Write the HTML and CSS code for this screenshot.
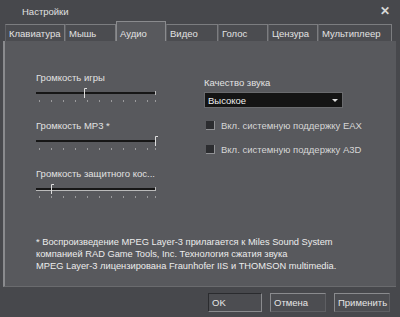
FILE: index.html
```html
<!DOCTYPE html>
<html lang="ru">
<head>
    <meta charset="UTF-8">
    <title>Настройки</title>
    <link rel="stylesheet" href="styles.css">
</head>
<body>
    <div class="window">
        <div class="titlebar">
            <span class="title">Настройки</span>
            <span class="close">&#x2715;</span>
        </div>

        <div class="tabs">
            <div class="tab" style="width: 60px">Клавиатура</div>
            <div class="tab" style="width: 51px">Мышь</div>
            <div class="tab active" style="width: 50px">Аудио</div>
            <div class="tab" style="width: 52px">Видео</div>
            <div class="tab" style="width: 50px">Голос</div>
            <div class="tab" style="width: 50px">Цензура</div>
            <div class="tab" style="width: 74px">Мультиплеер</div>
        </div>

        <div class="panel">
            <div class="columns">
                <div class="sliders">
                    <div class="slider">
                        <div class="label">Громкость игры</div>
                        <svg width="124" height="18" viewBox="0 0 124 18">
                            <rect x="0" y="4" width="119" height="2" fill="#161616"/>
                            <line x1="119.5" y1="3" x2="119.5" y2="7" stroke="#bbb"/>
                            <g stroke="#9a9a9c">
                                <line x1="3.5" y1="12" x2="3.5" y2="14"/><line x1="15.5" y1="12" x2="15.5" y2="14"/>
                                <line x1="27.5" y1="12" x2="27.5" y2="14"/><line x1="39.5" y1="12" x2="39.5" y2="14"/>
                                <line x1="51.5" y1="12" x2="51.5" y2="14"/><line x1="63.5" y1="12" x2="63.5" y2="14"/>
                                <line x1="75.5" y1="12" x2="75.5" y2="14"/><line x1="87.5" y1="12" x2="87.5" y2="14"/>
                                <line x1="99.5" y1="12" x2="99.5" y2="14"/><line x1="111.5" y1="12" x2="111.5" y2="14"/>
                                <line x1="119.5" y1="12" x2="119.5" y2="14"/>
                            </g>
                            <path d="M48.5 10 V0.5 H51" stroke="#ddd" fill="none"/>
                        </svg>
                    </div>
                    <div class="slider">
                        <div class="label">Громкость MP3 *</div>
                        <svg width="124" height="18" viewBox="0 0 124 18">
                            <rect x="0" y="4" width="119" height="2" fill="#161616"/>
                            <g stroke="#9a9a9c">
                                <line x1="3.5" y1="12" x2="3.5" y2="14"/><line x1="15.5" y1="12" x2="15.5" y2="14"/>
                                <line x1="27.5" y1="12" x2="27.5" y2="14"/><line x1="39.5" y1="12" x2="39.5" y2="14"/>
                                <line x1="51.5" y1="12" x2="51.5" y2="14"/><line x1="63.5" y1="12" x2="63.5" y2="14"/>
                                <line x1="75.5" y1="12" x2="75.5" y2="14"/><line x1="87.5" y1="12" x2="87.5" y2="14"/>
                                <line x1="99.5" y1="12" x2="99.5" y2="14"/><line x1="111.5" y1="12" x2="111.5" y2="14"/>
                                <line x1="119.5" y1="12" x2="119.5" y2="14"/>
                            </g>
                            <path d="M119.5 10 V0.5 H122" stroke="#ddd" fill="none"/>
                        </svg>
                    </div>
                    <div class="slider">
                        <div class="label">Громкость защитного кос...</div>
                        <svg width="124" height="18" viewBox="0 0 124 18">
                            <rect x="0" y="4" width="119" height="2" fill="#161616"/>
                            <line x1="0" y1="6.5" x2="120" y2="6.5" stroke="#bbb"/>
                            <line x1="119.5" y1="3" x2="119.5" y2="7" stroke="#bbb"/>
                            <g stroke="#9a9a9c">
                                <line x1="3.5" y1="12" x2="3.5" y2="14"/><line x1="15.5" y1="12" x2="15.5" y2="14"/>
                                <line x1="27.5" y1="12" x2="27.5" y2="14"/><line x1="39.5" y1="12" x2="39.5" y2="14"/>
                                <line x1="51.5" y1="12" x2="51.5" y2="14"/><line x1="63.5" y1="12" x2="63.5" y2="14"/>
                                <line x1="75.5" y1="12" x2="75.5" y2="14"/><line x1="87.5" y1="12" x2="87.5" y2="14"/>
                                <line x1="99.5" y1="12" x2="99.5" y2="14"/><line x1="111.5" y1="12" x2="111.5" y2="14"/>
                                <line x1="119.5" y1="12" x2="119.5" y2="14"/>
                            </g>
                            <path d="M15.5 10 V0.5 H18" stroke="#ddd" fill="none"/>
                        </svg>
                    </div>
                </div>

                <div class="options">
                    <div class="label">Качество звука</div>
                    <div class="select">
                        <span>Высокое</span>
                        <span class="arrow"></span>
                    </div>
                    <div class="check"><span class="box"></span>Вкл. системную поддержку EAX</div>
                    <div class="check"><span class="box"></span>Вкл. системную поддержку A3D</div>
                </div>
            </div>

            <p class="note">
                * Воспроизведение MPEG Layer-3 прилагается к Miles Sound System<br>
                компанией RAD Game Tools, Inc. Технология сжатия звука<br>
                MPEG Layer-3 лицензирована Fraunhofer IIS и THOMSON multimedia.
            </p>
        </div>

        <div class="buttons">
            <button class="btn ok">OK</button>
            <button class="btn">Отмена</button>
            <button class="btn">Применить</button>
        </div>
    </div>
</body>
</html>
```

FILE: styles.css
```css
body {
    margin: 0;
    background-color: #3c3d41;
    font-family: "Liberation Sans", Arial, sans-serif;
    font-size: 9.5px;
    color: #e6e6e6;
}
.window {
    width: 400px;
    height: 317px;
    display: flex;
    flex-direction: column;
    background-color: #47484c;
    box-sizing: border-box;
}
.titlebar {
    height: 22px;
    display: flex;
    align-items: center;
    justify-content: space-between;
    padding: 0 10px 0 22px;
}
.title {
    font-size: 9.5px;
    color: #e0e0e0;
}
.close {
    font-size: 12px;
    font-weight: bold;
    color: #d8d8d8;
}
.tabs {
    display: flex;
    align-items: flex-end;
    height: 19px;
    padding-left: 5px;
}
.tab {
    height: 17px;
    box-sizing: border-box;
    border: 1px solid #7c7d80;
    border-bottom: none;
    border-left-color: #606165;
    background-color: #4b4c50;
    padding: 3px 0 0 3px;
    font-size: 9.5px;
    color: #e2e2e2;
    white-space: nowrap;
    overflow: hidden;
}
.tab.active {
    height: 20px;
    padding-top: 6px;
    background-color: #58595d;
    border-color: #8a8b8e;
}
.panel {
    flex: 1;
    margin: 0 4px 0 3px;
    background-color: #58595d;
    border-left: 2px solid #8a8b8e;
    border-bottom: 1px solid #6a6b6e;
    box-sizing: border-box;
    padding: 31px 0 0 31px;
    display: flex;
    flex-direction: column;
}
.columns {
    display: grid;
    grid-template-columns: 168px 1fr;
}
.sliders {
    display: flex;
    flex-direction: column;
    gap: 14px;
}
.slider .label {
    margin-bottom: 5px;
}
.slider svg {
    display: block;
}
.label {
    font-size: 9.5px;
    color: #e2e2e2;
}
.options {
    padding-top: 5px;
}
.options .label {
    margin-bottom: 4px;
}
.select {
    width: 139px;
    height: 16px;
    box-sizing: border-box;
    background-color: #141414;
    border: 1px solid #6a6b6e;
    display: flex;
    align-items: center;
    justify-content: space-between;
    padding: 0 4px 0 3px;
    color: #eee;
}
.arrow {
    width: 0;
    height: 0;
    border-left: 3px solid transparent;
    border-right: 3px solid transparent;
    border-top: 3px solid #ddd;
}
.check {
    display: flex;
    align-items: center;
    gap: 6px;
    margin-top: 12px;
    padding-left: 2px;
    color: #d6d6d6;
}
.check + .check {
    margin-top: 13px;
}
.box {
    width: 8px;
    height: 8px;
    background-color: #2c2d30;
    border-right: 1px solid #909194;
    border-bottom: 1px solid #909194;
}
.note {
    margin: auto 0 14px;
    font-size: 9.3px;
    line-height: 12px;
    color: #ececec;
}
.buttons {
    height: 30px;
    display: flex;
    justify-content: flex-end;
    align-items: center;
    gap: 8px;
    padding-right: 10px;
}
.btn {
    width: 56px;
    height: 19px;
    background-color: #4c4d51;
    border: 1px solid #8a8b8e;
    border-right-color: #5e5f63;
    border-bottom-color: #5e5f63;
    color: #e6e6e6;
    font-family: "Liberation Sans", Arial, sans-serif;
    font-size: 9.5px;
    text-align: left;
    padding: 0 3px;
}
.btn.ok {
    width: 54px;
    border-color: #2a2b2e;
    border-right-color: #8a8b8e;
    border-bottom-color: #8a8b8e;
}
```
